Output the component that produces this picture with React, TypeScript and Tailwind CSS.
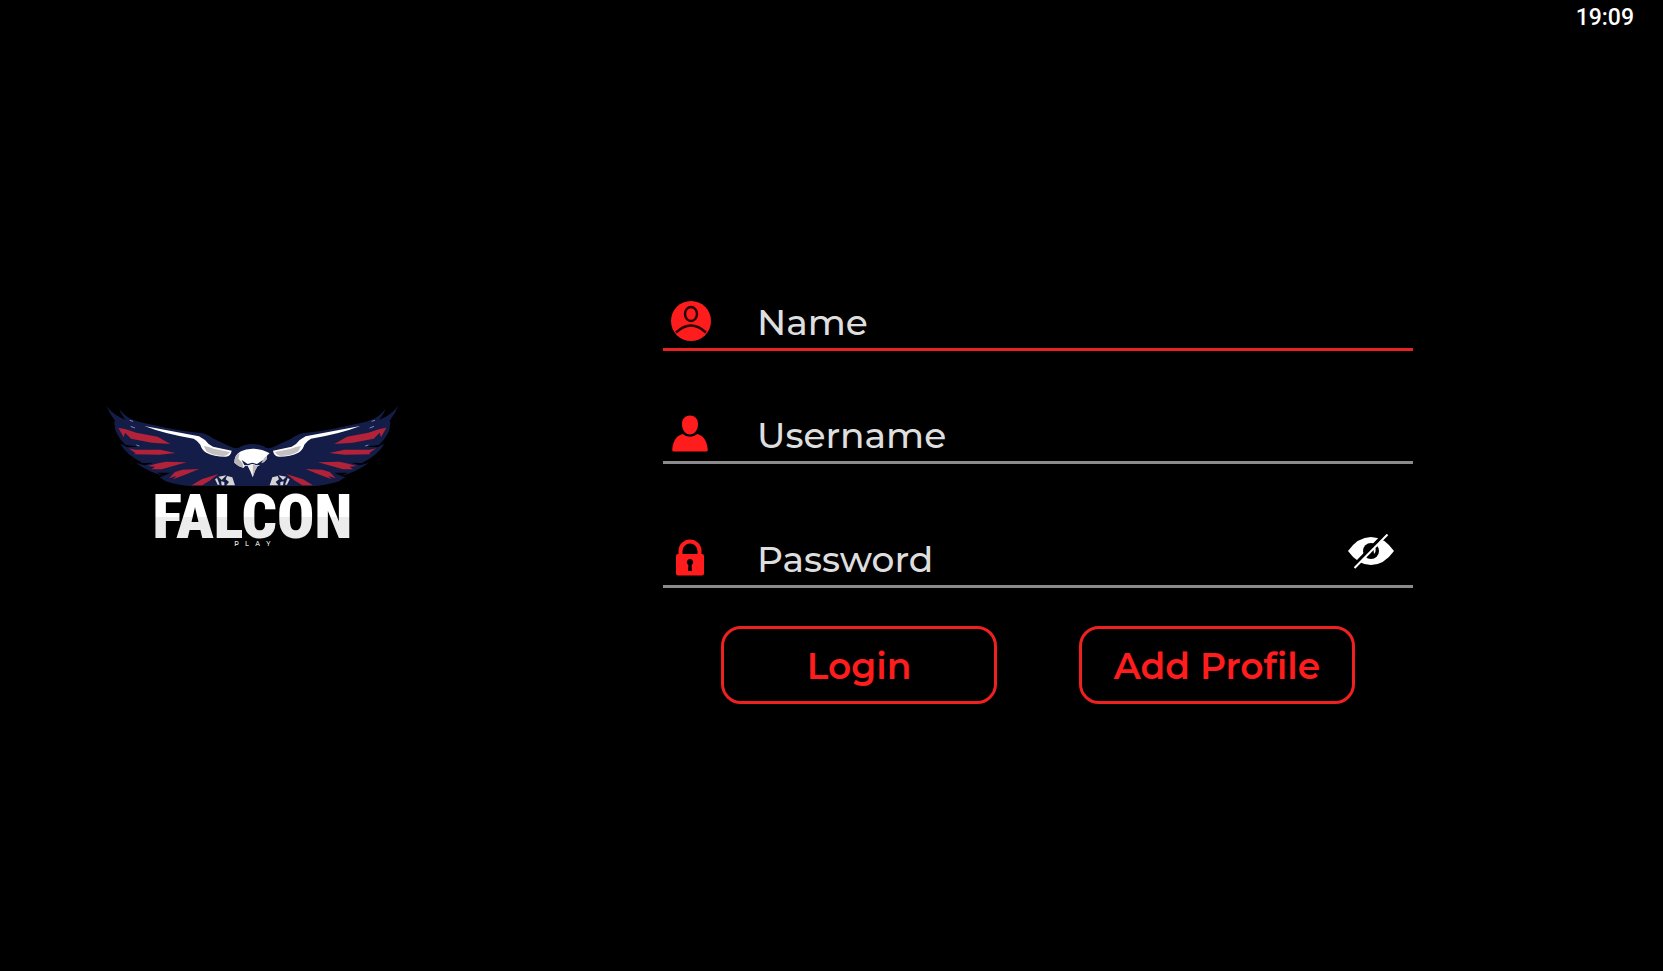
import React from "react";

const wing =
  "M34 34 C44 50 62 66 92 78 C82 66 76 56 73 45 C88 64 102 74 126 82 C190 98 260 112 318 117 C336 120 345 128 356 134 L402 156 Q416 164 430 162 Q446 150 473 150 L473 276 L283 276 Q240 272 212 262 L194 250 L206 246 Q160 234 124 208 L142 206 Q98 186 76 150 L92 152 Q58 122 58 86 L60 80 Q42 58 34 34 Z";

function HalfFalcon() {
  return (
    <>
      <path d={wing} fill="#141d48" />
      <path d="M76 150 L130 158 L98 160 Z M124 208 L176 206 L150 214 Z M186 236 L226 236 L206 246 Z" fill="#000" />
      <path d="M70 101 L90 105 L124 116 L188 128 L226 150 L170 146 L108 134 L90 116 L86 130 Z" fill="#b22239" />
      <path d="M101 163 L120 167 L196 167 L241 177 L196 182 L116 181 L122 178 Z" fill="#b22239" />
      <path d="M158 216 L190 208 L212 203 L275 205 L232 217 L200 226 L170 226 L180 218 Z" fill="#b22239" />
      <path d="M222 253 L240 234 L262 227 L312 225 L276 240 L234 256 L244 246 Z" fill="#b22239" />
      <path d="M290 274 L320 256 L370 240 L346 259 L322 274 Z" fill="#b22239" />
      <path d="M148 96 L312 127 L330 138 Q338 150 354 158 L410 170 Q408 186 392 188 Q356 188 334 176 Q320 168 316 152 Q308 140 296 134 Q210 120 148 96 Z" fill="#fff" />
      <path d="M326 156 Q342 158 356 164 L404 174 Q398 186 384 186 Q350 184 334 172 Z" fill="#c4bfc1" />
      <path d="M104 79 l10 3 M107 97 l13 5 M124 153 l9 3" stroke="#8189a8" strokeWidth="3" />
      <path d="M360 256 L366 252 L374 272 L368 272 Z M370 248 L394 244 L380 258 Z M396 246 L412 250 L420 274 L394 274 L402 264 L392 256 Z M378 262 L388 264 L388 274 L380 274 Z" fill="#d6d3d4" />
    </>
  );
}

function FalconLogo() {
  return (
    <svg viewBox="24 24 900 450" className="h-[150px] w-[300px] shrink-0" role="img" aria-label="Falcon Play">
      <defs>
        <linearGradient id="steel" x1="0" y1="0" x2="0" y2="1">
          <stop offset="0.5" stopColor="#fff" />
          <stop offset="0.5" stopColor="#ececec" />
        </linearGradient>
      </defs>
      <HalfFalcon />
      <g transform="translate(944 0) scale(-1 1)">
        <HalfFalcon />
      </g>
      <path d="M418 206 Q418 182 438 172 Q452 164 472 164 Q500 164 524 178 Q512 184 516 194 Q508 206 498 208 L492 216 L450 216 L446 222 Q430 218 418 206 Z" fill="#fff" />
      <path d="M418 206 Q418 186 434 176 L430 194 L442 206 L446 222 Q430 218 418 206 Z M524 178 Q512 184 516 194 Q508 206 498 208 L508 192 Z" fill="#b9b4b6" />
      <path d="M440 198 L458 210 L472 206 L486 210 L504 198 L496 214 L484 214 L472 210 L460 214 L448 214 Z" fill="#141d48" />
      <path d="M458 216 Q472 206 488 216 L480 230 L473 250 L466 232 Z" fill="#f1eff0" />
      <path d="M474 212 L488 216 L480 230 L473 250 Z" fill="#bcb8ba" />
      <text x="472" y="433" textAnchor="middle" className="font-['Roboto_Condensed','Liberation_Sans_Narrow',sans-serif] text-[186px] font-black" fill="url(#steel)">FALCON</text>
      <text x="472" y="457" textAnchor="middle" className="font-['Montserrat','Inter',sans-serif] text-[19px] font-semibold" fill="#ddd">{"P\u2003L\u2003A\u2003Y"}</text>
    </svg>
  );
}

function ProfileIcon() {
  return (
    <svg viewBox="0 0 40 40" className="size-10">
      <circle cx="20" cy="20" r="20" fill="#ff1c1c" />
      <ellipse cx="20" cy="13" rx="6" ry="7" fill="none" stroke="#260000" strokeWidth="2.4" />
      <path d="M5 31.500 Q20 17.500 35 31.500" fill="none" stroke="#260000" strokeWidth="2.400" />
    </svg>
  );
}

function UserIcon() {
  return (
    <svg viewBox="0 0 40 40" className="size-10">
      <path d="M19 1.500 C24 1.500 27 5 27 10 C27 16 23.500 20.500 19 20.500 S11 16 11 10 C11 5 14 1.500 19 1.500 Z M11.500 20 Q19 25.500 26.500 20 C33 22 36 27 36.800 36 Q36.800 37.500 35 37.500 L3 37.500 Q1.200 37.500 1.200 36 C2 27 5 22 11.500 20 Z" fill="#ff1c1c" />
    </svg>
  );
}

function LockIcon() {
  return (
    <svg viewBox="0 0 40 40" className="size-10">
      <path fillRule="evenodd" d="M7.500 16 V13 A11.500 11.500 0 0 1 30.500 13 V16 H31 Q33 16 33 18 V35.500 Q33 37.500 31 37.500 H7 Q5 37.500 5 35.500 V18 Q5 16 7 16 Z M11.500 16 H26.500 V13 A7.500 7.500 0 0 0 11.500 13 Z M17.400 27 L17 33 H21 L20.600 27 A3.200 3.200 0 1 0 17.400 27 Z" fill="#ff1c1c" />
    </svg>
  );
}

function HiddenEyeIcon() {
  return (
    <svg viewBox="0 0 46 36" className="h-9 w-[46px]">
      <path d="M0 18 Q10 4 23 4 T46 18 Q36 32 23 32 T0 18 Z" fill="#fff" />
      <circle cx="23" cy="18" r="8" fill="#000" />
      <path d="M25 12 Q30 16 26 21 Z" fill="#fff" />
      <path d="M6 33 L38 0" stroke="#000" strokeWidth="4" />
      <path d="M6.500 35 L39.500 1.500" stroke="#fff" strokeWidth="2" />
    </svg>
  );
}

type FieldProps = {
  id: string;
  label: string;
  type?: string;
  icon: React.ReactNode;
  active?: boolean;
  children?: React.ReactNode;
};

function Field({ id, label, type = "text", icon, active = false, children }: FieldProps) {
  return (
    <div className={`flex h-14 items-center border-b-3 pl-2 ${active ? "border-[#e82222]" : "border-[#8c8a8c]"}`}>
      <label htmlFor={id} className="shrink-0" aria-label={label}>{icon}</label>
      <input
        id={id}
        type={type}
        placeholder={label}
        className="ml-[46px] h-12 min-w-0 flex-1 bg-transparent pt-0.5 text-[36px] font-medium text-[#dedede] outline-none placeholder:text-[#dedede]"
      />
      {children}
    </div>
  );
}

const buttonClass =
  "h-[78px] w-[276px] rounded-[20px] border-3 border-[#ee2020] pt-[3px] text-[36px] font-semibold text-[#ff1c1c]";

export default function App() {
  return (
    <div className="flex min-h-screen flex-col bg-black font-['Montserrat','Inter',sans-serif]">
      <header className="flex h-[27px] justify-end pt-1.5 pr-[29px]">
        <time className="font-['Roboto',sans-serif] text-[23px] leading-6 font-medium text-white">19:09</time>
      </header>
      <main className="grid flex-1 grid-cols-[663fr_750fr_250fr] items-center">
        <div className="mb-11 pl-[103px]">
          <FalconLogo />
        </div>
        <form onSubmit={(e) => e.preventDefault()}>
          <Field id="name" label="Name" icon={<ProfileIcon />} active />
          <div className="mt-[57px]">
            <Field id="username" label="Username" icon={<UserIcon />} />
          </div>
          <div className="mt-17">
            <Field id="password" label="Password" type="password" icon={<LockIcon />}>
              <button type="button" aria-label="Show password" className="mr-[19px] mb-3.5">
                <HiddenEyeIcon />
              </button>
            </Field>
          </div>
          <div className="mt-[38px] flex justify-center gap-[82px]">
            <button type="submit" className={buttonClass}>Login</button>
            <button type="button" className={buttonClass}>Add Profile</button>
          </div>
        </form>
      </main>
    </div>
  );
}
